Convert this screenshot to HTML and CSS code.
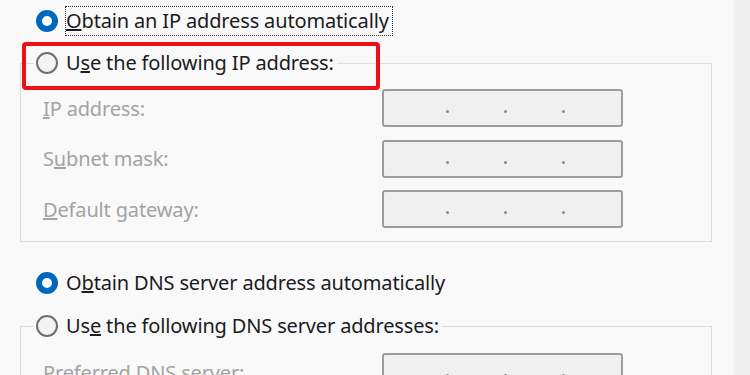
FILE: index.html
```html
<!DOCTYPE html>
<html>
<head>
<meta charset="utf-8">
<link rel="stylesheet" href="styles.css">
</head>
<body>
<div class="window">
  <div class="pane">
    <div class="choice top">
      <span class="radio checked"></span>
      <span class="text focus"><u>O</u>btain an IP address automatically</span>
    </div>

    <fieldset class="group">
      <legend class="choice">
        <span class="radio"></span>
        <span class="text">U<u>s</u>e the following IP address:</span>
      </legend>
      <div class="fields">
        <span class="label"><u>I</u>P address:</span>
        <div class="ipbox"><i></i><i></i><i></i></div>
        <span class="label">S<u>u</u>bnet mask:</span>
        <div class="ipbox"><i></i><i></i><i></i></div>
        <span class="label"><u>D</u>efault gateway:</span>
        <div class="ipbox"><i></i><i></i><i></i></div>
      </div>
    </fieldset>

    <div class="choice dns">
      <span class="radio checked"></span>
      <span class="text">O<u>b</u>tain DNS server address automatically</span>
    </div>

    <fieldset class="group second">
      <legend class="choice">
        <span class="radio"></span>
        <span class="text">Us<u>e</u> the following DNS server addresses:</span>
      </legend>
      <div class="fields">
        <span class="label"><u>P</u>referred DNS server:</span>
        <div class="ipbox"><i></i><i></i><i></i></div>
      </div>
    </fieldset>

    <div class="callout"></div>
  </div>
  <div class="edge"></div>
</div>
</body>
</html>
```

FILE: styles.css
```css
html, body {
  margin: 0;
  padding: 0;
  background: #f9f9f9;
}

body {
  width: 750px;
  height: 375px;
  overflow: hidden;
  font-family: "Noto Sans", "Open Sans", sans-serif;
  font-size: 20px;
  color: #1b1b22;
}

.window {
  display: flex;
  height: 375px;
}

.pane {
  position: relative;
  width: 733px;
  padding-top: 7px;
  box-sizing: border-box;
}

.edge {
  flex: 1;
  background: #efefef;
  border-left: 2px solid #f4f4f4;
}

.choice {
  display: flex;
  align-items: center;
  gap: 8px;
  height: 28px;
  line-height: 28px;
  white-space: nowrap;
}

.choice.top,
.choice.dns {
  padding-left: 36px;
}

.choice.dns {
  margin-top: 27px;
}

.radio {
  flex: none;
  width: 22px;
  height: 22px;
  box-sizing: border-box;
  border-radius: 50%;
  border: 2px solid #6f6f6f;
  background: #f3f3f3;
}

.radio.checked {
  border: 6.5px solid #0067c0;
  background: #ffffff;
}

.text {
  letter-spacing: -0.15px;
}

.focus {
  outline: 1px dotted #333;
  outline-offset: 0;
  padding: 0 3px 0 0;
}

.group {
  margin: 14px 0 0 20px;
  width: 692px;
  box-sizing: border-box;
  border: 1px solid #dcdcdc;
  padding: 12px 0 13px 22px;
}

.group.second {
  margin-top: 15px;
  padding-top: 13px;
}

.group legend {
  margin-left: -9px;
  padding: 0 3px 0 2px;
}

.fields {
  display: grid;
  grid-template-columns: 339px 241px;
  grid-auto-rows: 38px;
  row-gap: 12.5px;
  align-items: center;
}

.label {
  color: #a3a3a3;
  letter-spacing: -0.15px;
}

.ipbox {
  height: 38px;
  box-sizing: border-box;
  border: 2px solid #9c9c9c;
  border-radius: 3px;
  background: #f0f0f0;
  display: flex;
  align-items: flex-end;
  padding: 0 0 12px 62px;
  gap: 55px;
}

.ipbox i {
  width: 3px;
  height: 3px;
  border-radius: 50%;
  background: #8a8a8a;
}

.callout {
  position: absolute;
  left: 22px;
  top: 42px;
  width: 358px;
  height: 48px;
  box-sizing: border-box;
  border: 4px solid #ec1118;
  border-radius: 4px;
}
```
